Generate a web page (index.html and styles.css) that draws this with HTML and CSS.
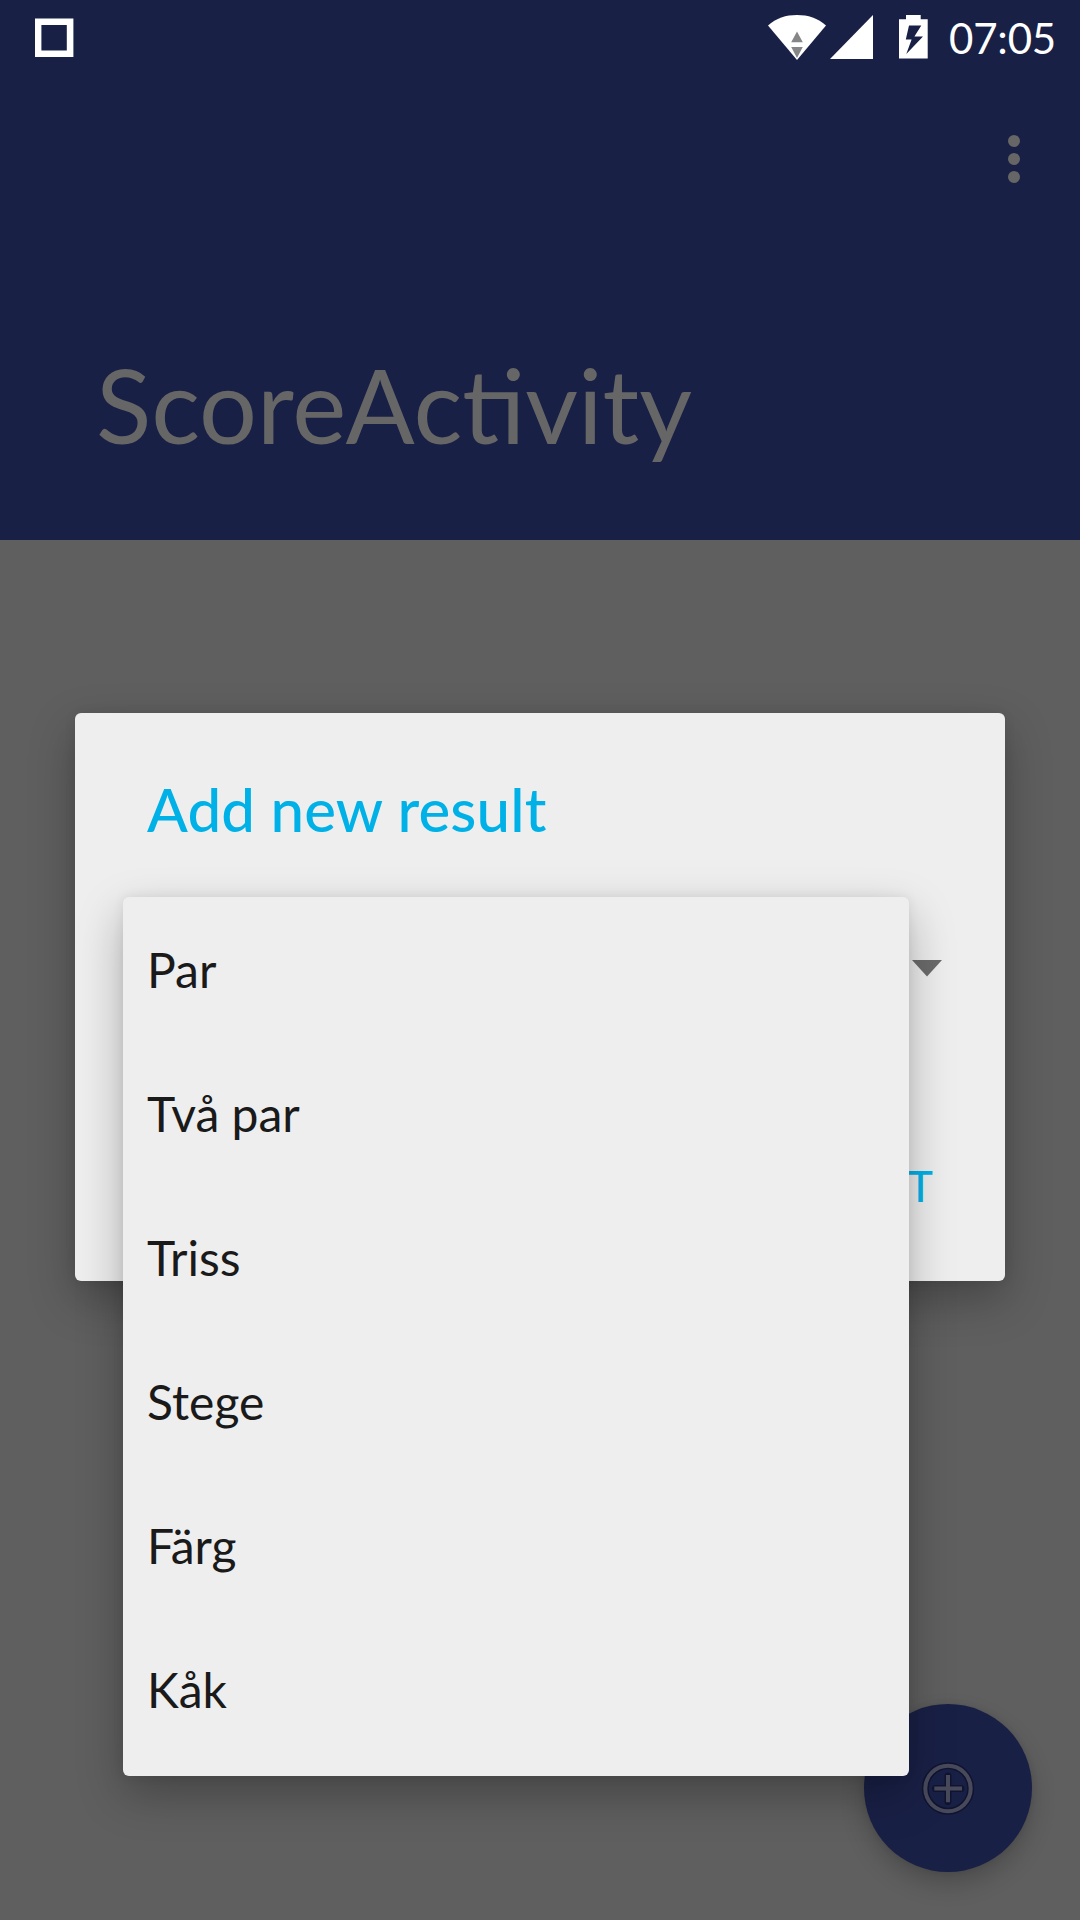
FILE: index.html
```html
<!DOCTYPE html>
<html lang="sv">
<head>
<meta charset="utf-8">
<title>ScoreActivity</title>
<link rel="stylesheet" href="styles.css">
</head>
<body>
<div class="screen">
  <header class="app-bar">
    <div class="status-bar">
      <svg class="notification" width="40" height="40" viewBox="0 0 40 40"><path fill="#fff" fill-rule="evenodd" d="M0 .6H38.4V39H0zM6.4 7V32.5H31.8V7z"/></svg>
      <div class="system-icons">
        <svg class="wifi" width="58" height="46" viewBox="0 0 58 46"><path fill="#fff" d="M0 11.5C8 4 18 1 29 1s21 3 29 10.5L29 46z"/><path fill="#868686" d="M29 17.5 34.8 28.3H23.2zM23.2 33H34.8L29 44z"/></svg>
        <svg class="signal" width="43" height="44" viewBox="0 0 43 44"><path fill="#fff" d="M43 0V44H0z"/></svg>
        <svg class="battery" width="29" height="44" viewBox="0 0 29 44"><path fill="#fff" fill-rule="evenodd" d="M7 0H21.7V4.3H28.7V43.6H0V4.3H7zM10 10.6 6.8 24.5H12.6L7.3 39 24 21.5H15.4L22.3 10.6z"/></svg>
        <span class="clock">07:05</span>
      </div>
    </div>
    <div class="toolbar">
      <svg width="12" height="48" viewBox="0 0 12 48" fill="#666"><circle cx="6" cy="6" r="6"/><circle cx="6" cy="24" r="6"/><circle cx="6" cy="42" r="6"/></svg>
    </div>
    <h1 class="app-title">ScoreActivity</h1>
  </header>

  <div class="fab">
    <svg width="60" height="60" viewBox="0 0 60 60" fill="none">
      <g stroke="#10142f" stroke-width="7" stroke-linecap="round"><circle cx="30" cy="30.5" r="22.7"/><path d="M30 18V43.5M17.5 30.5H43"/></g>
      <g stroke="#484a5c" stroke-width="4"><circle cx="30" cy="30.5" r="22.7"/><path d="M30 17V44.3M16.3 30.5H44"/></g>
    </svg>
  </div>

  <section class="dialog">
    <h2 class="dialog-title">Add new result</h2>
    <div class="spinner">
      <svg width="30" height="17" viewBox="0 0 30 17"><path fill="#6b6b6b" d="M0 0H30L15 16.5z"/></svg>
    </div>
    <div class="actions">T</div>
  </section>

  <ul class="menu">
    <li>Par</li>
    <li>Två par</li>
    <li>Triss</li>
    <li>Stege</li>
    <li>Färg</li>
    <li>Kåk</li>
  </ul>
</div>
</body>
</html>
```
FILE: styles.css
```css
* { box-sizing: border-box; }

body {
  margin: 0;
  font-family: Lato, sans-serif;
}

.screen {
  position: relative;
  width: 1080px;
  height: 1920px;
  overflow: hidden;
  background: #5f5f5f;
}

.app-bar {
  display: flex;
  flex-direction: column;
  height: 540px;
  background: #192046;
}

.status-bar {
  display: flex;
  justify-content: space-between;
  height: 72px;
  padding: 0 24px 0 35px;
  color: #fff;
}

.notification { margin-top: 18px; }

.system-icons {
  display: flex;
  align-items: flex-start;
}

.wifi { margin-top: 14px; }
.signal { margin: 15px 26px 0 4px; }
.battery { margin-top: 15px; }

.clock {
  margin-left: 21px;
  font-size: 42px;
  letter-spacing: -.2px;
  line-height: 76px;
}

.toolbar {
  display: flex;
  justify-content: flex-end;
  padding: 63px 60px 0 0;
}

.app-title {
  margin: auto 0 70px 96px;
  font-size: 102.3px;
  font-weight: 400;
  line-height: 130px;
  color: #666;
}

.fab {
  position: absolute;
  left: 864px;
  top: 1704px;
  display: flex;
  align-items: center;
  justify-content: center;
  width: 168px;
  height: 168px;
  border-radius: 50%;
  background: #192046;
  box-shadow: 0 12px 24px rgba(0, 0, 0, .2), 0 0 6px rgba(0, 0, 0, .1);
}

.dialog {
  position: absolute;
  left: 75px;
  top: 713px;
  width: 930px;
  height: 568px;
  padding: 58px 72px 0;
  border-radius: 6px;
  background: #eee;
  box-shadow: 0 18px 46px rgba(0, 0, 0, .28), 0 0 12px rgba(0, 0, 0, .07);
}

.dialog-title {
  margin: 0;
  font-size: 60px;
  font-weight: 500;
  letter-spacing: .16px;
  line-height: 76px;
  color: #00b1e8;
}

.spinner {
  display: flex;
  align-items: center;
  justify-content: flex-end;
  height: 144px;
  margin-top: 49px;
}

.spinner svg { margin-right: -9px; }

.actions {
  margin-top: 116px;
  font-size: 42px;
  font-weight: 500;
  line-height: 60px;
  text-align: right;
  color: #00b1e8;
}

.menu {
  position: absolute;
  left: 123px;
  top: 897px;
  width: 786px;
  height: 879px;
  margin: 0;
  padding: 1px 24px 0;
  border-radius: 6px;
  list-style: none;
  background: #eee;
  box-shadow: 0 18px 46px rgba(0, 0, 0, .28), 0 0 12px rgba(0, 0, 0, .07);
}

.menu li {
  height: 144px;
  font-size: 48px;
  line-height: 144px;
  color: #1a1a1a;
}
```
